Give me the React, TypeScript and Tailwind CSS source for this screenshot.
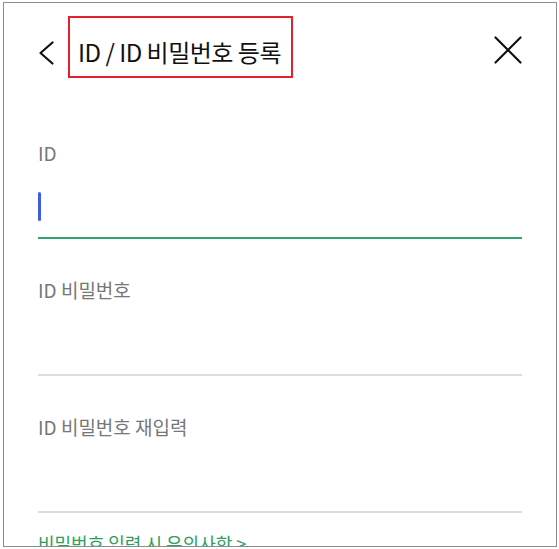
import React from "react"

const font = { fontFamily: '"Noto Sans CJK KR", "Noto Sans", sans-serif' }

function Field({ label, active }: { label: string; active?: boolean }) {
  return (
    <div className="flex flex-col">
      <div className="text-[19px] leading-[26px] text-[#777] whitespace-pre">{label}</div>
      <div className="mt-[25px] h-[30px] flex items-center">
        {active && <div className="w-[3px] h-[29px] rounded-full bg-[#3b5ce6]" />}
      </div>
      <div className={active ? "mt-[16px] h-[2px] bg-[#2fa46b]" : "mt-[16px] h-[2px] bg-[#dcdcdc]"} />
    </div>
  )
}

export default function App() {
  return (
    <div className="bg-white w-[559px] h-[549px] pt-[2px] pl-[3px]" style={font}>
      <div className="w-[554px] h-[545px] border border-[#8c8c8c] overflow-hidden px-[34px] pt-[13px]">
        <header className="flex items-center">
          <svg width="16" height="24" viewBox="0 0 16 24" className="mt-[11px] shrink-0">
            <path d="M14.5 1.5 L2.5 12 L14.5 22.5" fill="none" stroke="#111" strokeWidth="2.2" strokeLinecap="round" strokeLinejoin="round" />
          </svg>
          <div className="ml-[14px] border-2 border-[#e3202b] pl-[8px] pr-[10px] pt-[20px] pb-[10px]">
            <h1 className="text-[24px] leading-[28px] font-normal text-[#111] tracking-[-0.5px] whitespace-nowrap">
              ID / ID 비밀번호 등록
            </h1>
          </div>
          <svg width="28" height="28" viewBox="0 0 28 28" className="ml-auto mt-[6px] shrink-0">
            <path d="M1.5 1.5 L26.5 26.5 M26.5 1.5 L1.5 26.5" fill="none" stroke="#111" strokeWidth="2.2" strokeLinecap="round" />
          </svg>
        </header>

        <div className="mt-[62px] flex flex-col gap-[38px]">
          <Field label="ID" active />
          <Field label="ID 비밀번호" />
          <Field label="ID 비밀번호 재입력" />
        </div>
        <div className="mt-[17px] text-[18px] leading-[26px] text-[#2e9e5f]">비밀번호 입력 시 유의사항 &gt;</div>
      </div>
    </div>
  )
}
